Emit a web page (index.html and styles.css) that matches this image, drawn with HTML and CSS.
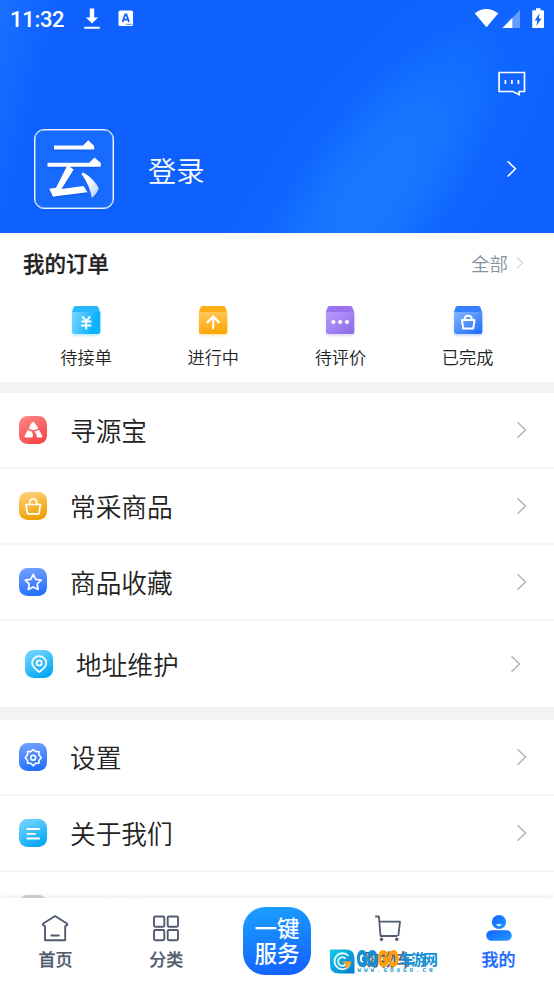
FILE: index.html
```html
<!DOCTYPE html>
<html lang="zh-CN">
<head>
<meta charset="utf-8">
<title>我的</title>
<link rel="stylesheet" href="styles.css">
</head>
<body>
<svg class="defs" width="0" height="0" aria-hidden="true">
  <defs>
    <linearGradient id="red" x1=".2" y1="0" x2=".7" y2="1"><stop stop-color="#ff8585"/><stop offset="1" stop-color="#f54545"/></linearGradient>
    <linearGradient id="gold" x1=".3" y1="0" x2=".6" y2="1"><stop stop-color="#ffcf73"/><stop offset="1" stop-color="#eea000"/></linearGradient>
    <linearGradient id="blue" x1=".4" y1="0" x2=".6" y2="1"><stop stop-color="#709eff"/><stop offset="1" stop-color="#2170ff"/></linearGradient>
    <linearGradient id="cyan" x1=".2" y1="0" x2=".7" y2="1"><stop offset=".15" stop-color="#65cfff"/><stop offset="1" stop-color="#00a6f5"/></linearGradient>
    <linearGradient id="boxCyan" x1="0" y1=".3" x2="1" y2=".6"><stop stop-color="#72d3ff"/><stop offset=".8" stop-color="#0bb2ff"/></linearGradient>
    <linearGradient id="boxGold" x1=".4" y1="0" x2=".6" y2="1"><stop stop-color="#ffc75b"/><stop offset="1" stop-color="#fca400"/></linearGradient>
    <linearGradient id="boxViolet" x1="0" y1=".2" x2=".8" y2="1"><stop stop-color="#b597fc"/><stop offset="1" stop-color="#8f6ee8"/></linearGradient>
    <linearGradient id="boxBlue" x1="0" y1=".1" x2=".8" y2="1"><stop stop-color="#83b1ff"/><stop offset="1" stop-color="#2472ff"/></linearGradient>
    <linearGradient id="user" x1="0" y1="0" x2="1" y2="1"><stop stop-color="#1463ff"/><stop offset="1" stop-color="#1e9bff"/></linearGradient>
    <linearGradient id="cloud" x1=".2" y1="0" x2="1" y2=".8"><stop offset=".3" stop-color="#fff"/><stop offset="1" stop-color="#b9d1ff"/></linearGradient>
    <linearGradient id="mark" x1="0" y1="0" x2="1" y2="1"><stop stop-color="#12cdea"/><stop offset="1" stop-color="#0878cd"/></linearGradient>
  </defs>
</svg>
<div class="app">
  <header class="hero">
    <div class="status">
      <span class="time">11:32</span>
      <svg class="download" width="16" height="22" viewBox="0 0 16 22" fill="#fff"><path d="M5.8.5h4.400v9h3.900L8 15.500 1.900 9.500h3.900zM.3 18.800h15.400v2H.3z"/></svg>
      <svg class="ime" width="16" height="17" viewBox="0 0 16 17"><rect x=".5" y=".5" width="14.500" height="15.500" rx="1.600" fill="#fff"/><path d="m4.600 12 2.600-7.500h1.200L11 12M5.500 9.600h4.600" fill="none" stroke="#1264fd" stroke-width="1.800"/><path d="M8 14.300h1.500m.6 0h1.500m.6 0h1.500" stroke="#1264fd"/></svg>
      <svg class="signals" width="72" height="22" viewBox="0 0 72 22"><path d="M.7 5.200Q12-3.400 24.300 5.200L12.500 19.300z" fill="#fff"/><path d="M46 2v18H28.500z" fill="#659bff"/><path d="M38.300 9.800V20H28.500z" fill="#fff"/><path d="M62 .3h4.500v2h2.700q.8 0 .8.8V19q0 .9-.8.9H59q-.8 0-.8-.9V3.100q0-.8.8-.8h3z" fill="#fff"/><path d="m65.700 5.200-5 7.300h2.700l-1 5.400 5-7.500h-2.700l1-5.200z" fill="#1264fd"/></svg>
    </div>
    <div class="toolbar">
      <svg width="28" height="26" viewBox="0 0 28 26" fill="none" stroke="#fff" stroke-width="1.700"><path d="M1.100 1.500h25.400v19h-5.300v3.200L15 20.500H1.100z"/><path d="M7.400 9v4m6.500-4v4m6.500-4v4"/></svg>
    </div>
    <div class="profile">
      <div class="avatar">
        <svg width="80" height="80" viewBox="0 0 80 80"><path d="M20 16.500h29l5.200-5.200 6 5.600v3.600H20zM13.500 33.700h41.700l5.300-5.200 6.300 5.500v3.800H13.500z" fill="#fff"/><path d="M33.500 36l6.200 4.500L27.500 60l22-3 4 6.200-30 3.700-4.500.8-3.700-8 6.700-1z" fill="#fff"/><path d="M49.500 43.500Q60 50 64.700 59q-1 5-6.900 10Q56 57 47.300 44.800z" fill="url(#cloud)"/></svg>
      </div>
      <span class="login">登录</span>
      <svg class="hero-arrow" width="12" height="18" viewBox="0 0 12 18" fill="none" stroke="#fff" stroke-width="1.600"><path d="m1.700 1.300 7.700 7.500-7.700 7.700"/></svg>
    </div>
  </header>

  <section class="orders">
    <div class="orders-head">
      <h2>我的订单</h2>
      <a class="all">全部<svg width="8" height="14" viewBox="0 0 8 14" fill="none" stroke="#cdd0d6" stroke-width="1.200"><path d="m1 1.500 5.500 5.300L1 12.300"/></svg></a>
    </div>
    <div class="order-grid">
      <div class="order cyan">
        <svg width="32" height="32" viewBox="0 0 32 32"><path d="M5.500 1h21q1.500 0 2 1.500L30 7H2l1.500-4.500Q4 1 5.500 1z" fill="#28b9fc"/><path d="M2 7h28.300v19.500q0 2.500-2.500 2.500H4.500Q2 29 2 26.500z" fill="url(#boxCyan)"/><path d="m12.200 11.500 4 4.500 4-4.500M11.300 16.500h10m-10 4h10M16.200 16v8.500" fill="none" stroke="#fff" stroke-width="2"/></svg>
        <span>待接单</span>
      </div>
      <div class="order gold">
        <svg width="32" height="32" viewBox="0 0 32 32"><path d="M5.500 1h21q1.500 0 2 1.500L30 7H2l1.500-4.500Q4 1 5.500 1z" fill="#fdac13"/><path d="M2 7h28.300v19.500q0 2.500-2.500 2.500H4.500Q2 29 2 26.500z" fill="url(#boxGold)"/><path d="M10.500 17.300l5.700-5.700 5.700 5.700M16.200 12v11.500" fill="none" stroke="#fff" stroke-width="2.200" stroke-linecap="round"/></svg>
        <span>进行中</span>
      </div>
      <div class="order violet">
        <svg width="32" height="32" viewBox="0 0 32 32"><path d="M5.500 1h21q1.500 0 2 1.500L30 7H2l1.500-4.500Q4 1 5.500 1z" fill="#9973ee"/><path d="M2 7h28.300v19.500q0 2.500-2.500 2.500H4.500Q2 29 2 26.500z" fill="url(#boxViolet)"/><g fill="#fff"><circle cx="9.400" cy="17" r="2.100"/><circle cx="16.200" cy="17" r="2.100"/><circle cx="23" cy="17" r="2.100"/></g></svg>
        <span>待评价</span>
      </div>
      <div class="order blue">
        <svg width="32" height="32" viewBox="0 0 32 32"><path d="M5.500 1h21q1.500 0 2 1.500L30 7H2l1.500-4.500Q4 1 5.500 1z" fill="#3680ff"/><path d="M2 7h28.300v19.500q0 2.500-2.500 2.500H4.500Q2 29 2 26.500z" fill="url(#boxBlue)"/><path d="M10 15h12.500l-1.300 8.500h-10zM12.400 15q.2-4.300 3.800-4.300t3.900 4.300" fill="none" stroke="#fff" stroke-width="2" stroke-linejoin="round"/></svg>
        <span>已完成</span>
      </div>
    </div>
  </section>

  <main class="menu">
    <section class="group">
      <div class="row">
        <svg class="badge" viewBox="0 0 28 28"><rect width="28" height="28" rx="8.500" fill="url(#red)"/><path d="M12.500 6.900q1.700-1.600 3.400 0l3.400 5.400q-2.800 2.100-5.300 1.900L9.600 12.400zM8.600 13.900l4.400 1.900q1.500 2.800.5 5.600H6.300q-1.200-.2-.7-1.500zm6.900 1.500q2.700-.4 4.400-1.700l3.400 6.200q.5 1.400-.9 1.500H18q-.2-3.500-2.500-6z" fill="#fff"/></svg>
        <span>寻源宝</span><svg class="chevron" viewBox="0 0 12 18"><path d="m1.500 1.200 8 7.800-8 7.800"/></svg>
      </div>
      <div class="row">
        <svg class="badge" viewBox="0 0 28 28"><rect width="28" height="28" rx="8.500" fill="url(#gold)"/><path d="M7 12.500h14.400l-1.500 9.300H8.500zM10.500 12.500q0-5.800 3.700-5.800t3.800 5.800" fill="none" stroke="#fff" stroke-width="1.700" stroke-linejoin="round"/></svg>
        <span>常采商品</span><svg class="chevron" viewBox="0 0 12 18"><path d="m1.500 1.200 8 7.800-8 7.800"/></svg>
      </div>
      <div class="row">
        <svg class="badge" viewBox="0 0 28 28"><rect width="28" height="28" rx="8.500" fill="url(#blue)"/><path d="m14.200 6.400 2.500 4.900 5.400.8-3.900 3.900.9 5.500-4.900-2.600-4.900 2.600.9-5.500-3.900-3.900 5.400-.8z" fill="none" stroke="#fff" stroke-width="1.700" stroke-linejoin="round"/></svg>
        <span>商品收藏</span><svg class="chevron" viewBox="0 0 12 18"><path d="m1.500 1.200 8 7.800-8 7.800"/></svg>
      </div>
      <div class="row address">
        <svg class="badge" viewBox="0 0 28 28"><rect width="28" height="28" rx="8.500" fill="url(#cyan)"/><path d="M14.200 22q-7.100-5.200-7.100-9a7.100 6.800 0 0 1 14.200 0q0 3.800-7.100 9z" fill="none" stroke="#fff" stroke-width="1.700"/><circle cx="14.200" cy="13" r="2.500" fill="none" stroke="#fff" stroke-width="1.700"/></svg>
        <span>地址维护</span><svg class="chevron" viewBox="0 0 12 18"><path d="m1.500 1.200 8 7.800-8 7.800"/></svg>
      </div>
    </section>
    <section class="group">
      <div class="row">
        <svg class="badge" viewBox="0 0 28 28"><rect width="28" height="28" rx="8.500" fill="url(#blue)"/><path d="m14.200 6.600 2.600 2h3.100v3.200l2.300 2.900-2.300 2.700v2.800h-3.100l-2.600 2.400-2.600-2.400H8.500v-2.800l-2.200-2.700 2.200-2.900V8.600h3.100z" fill="none" stroke="#fff" stroke-width="1.600" stroke-linejoin="round"/><circle cx="14.200" cy="14.700" r="2.400" fill="none" stroke="#fff" stroke-width="1.600"/></svg>
        <span>设置</span><svg class="chevron" viewBox="0 0 12 18"><path d="m1.500 1.200 8 7.800-8 7.800"/></svg>
      </div>
      <div class="row">
        <svg class="badge" viewBox="0 0 28 28"><rect width="28" height="28" rx="8.500" fill="url(#cyan)"/><path d="M8.300 10h11.900M8.300 14.800h7.800M8.300 19.500h11.900" stroke="#fff" stroke-width="1.800" stroke-linecap="round"/></svg>
        <span>关于我们</span><svg class="chevron" viewBox="0 0 12 18"><path d="m1.500 1.200 8 7.800-8 7.800"/></svg>
      </div>
      <div class="row faded">
        <svg class="badge" viewBox="0 0 28 28"><rect width="28" height="28" rx="8.500" fill="#d2d2d2"/></svg>
        <span>退出登录</span>
      </div>
    </section>
  </main>

  <nav class="tabs">
    <a class="tab"><svg width="30" height="30" viewBox="0 0 30 30" fill="none" stroke="#515c6f" stroke-width="1.900" stroke-linejoin="round" stroke-linecap="round"><path d="M5 12.300 2.900 10.900 3.300 9.500 15.100 2 26.900 9.500l.4 1.400-2.100 1.400v14H5z"/><path d="M11.300 21.500h7.500"/></svg><span>首页</span></a>
    <a class="tab"><svg width="30" height="30" viewBox="0 0 30 30" fill="none" stroke="#515c6f" stroke-width="1.900"><rect x="3" y="2.500" width="10.300" height="10.300" rx="1.200"/><rect x="16.700" y="2.500" width="10.300" height="10.300" rx="1.200"/><rect x="3" y="16" width="10.300" height="10.300" rx="1.200"/><rect x="16.700" y="16" width="10.300" height="10.300" rx="1.200"/></svg><span>分类</span></a>
    <a class="service"><span>一键</span><span>服务</span></a>
    <a class="tab"><svg width="30" height="30" viewBox="0 0 30 30" fill="none" stroke="#515c6f" stroke-width="1.800" stroke-linejoin="round"><path d="M2.200 2.500h3.700L7.500 22H24.300M6.500 7.700h20.500L25.300 22"/><circle cx="8.500" cy="25.300" r="1.300" fill="#515c6f" stroke-width="1"/><circle cx="23.800" cy="25.300" r="1.300" fill="#515c6f" stroke-width="1"/></svg><span>购物车</span>
      <span class="watermark"><svg width="25" height="25" viewBox="0 0 25 25"><path d="M0 .5h16Q24.500.5 24.500 9v15.500H9Q0 24.500 0 16z" fill="url(#mark)"/><path d="M18.500 7a8 8 0 1 0 1.300 8.500M15.500 9.500a4.300 4.300 0 1 0 0 6" fill="none" stroke="#e9fbff" stroke-width="1.800"/><path d="M12 12.500h9.500q-1 5.500-6.500 7.500l1-4z" fill="#ffa51d"/></svg><span class="brand"><span class="brand-name"><b>GO</b><b class="orange">GO</b><i>车游网</i></span><small>WWW.GO9GO.CN</small></span></span>
    </a>
    <a class="tab active"><svg width="30" height="30" viewBox="0 0 30 30"><circle cx="15" cy="8" r="7.100" fill="url(#user)"/><rect x="2.200" y="16.300" width="25.500" height="10.500" rx="5.200" fill="url(#user)"/><path d="M12.200 10.300h5.400q-.7 2-2.700 2t-2.700-2z" fill="#fff"/></svg><span>我的</span></a>
  </nav>
</div>
</body>
</html>
```
FILE: styles.css
```css
* { box-sizing: border-box; }
body {
  margin: 0;
  background: #fff;
  color: #222;
  font-family: "Noto Sans CJK SC", sans-serif;
}
svg { display: block; flex: none; }
.defs { position: absolute; }
.app { width: 554px; height: 984px; overflow: hidden; display: flex; flex-direction: column; }

.hero {
  position: relative;
  isolation: isolate;
  overflow: hidden;
  flex: none;
  height: 233px;
  color: #fff;
  background: linear-gradient(104deg, #1a70ff 0, rgba(26,112,255,0) 60px), #0f61ff;
}
/* diagonal glow */
.hero::before {
  content: "";
  position: absolute;
  z-index: -1;
  left: 75px;
  top: 80px;
  width: 600px;
  height: 220px;
  transform: rotate(-54deg);
  background: radial-gradient(closest-side, #1a78ff 0, rgba(24,118,255,.9) 35%, rgba(16,108,255,.5) 65%, transparent 100%);
}
.status { height: 38px; display: flex; align-items: flex-start; padding: 8px 8px 0 10px; }
.time { font: 500 22px/23px Roboto, sans-serif; width: 74px; letter-spacing: -.3px; }
.ime { margin: 2px 0 0 18px; }
.signals { margin-left: auto; }
.toolbar { height: 68px; display: flex; justify-content: flex-end; padding: 33px 28px 0 0; }
.profile { display: flex; align-items: center; height: 80px; margin-top: 23px; padding: 0 36px 0 34px; }
.avatar { width: 80px; height: 80px; border: 1px solid #f0f5ff; border-radius: 10px; background: #176bff; overflow: hidden; box-shadow: inset 0 0 0 .5px #d6e4ff; }
.avatar svg { margin: -1px; filter: drop-shadow(0 1px 1px rgba(0,40,160,.3)); }
.login { margin: 2px 0 0 34px; font-size: 28.300px; line-height: 40px; font-weight: 350; }
.hero-arrow { margin-left: auto; }

.orders { flex: none; height: 149px; }
.orders-head { display: flex; justify-content: space-between; align-items: center; height: 60px; padding: 0 30px 0 23px; }
h2 { margin: 0; font-size: 21.500px; line-height: 30px; font-weight: 500; -webkit-text-stroke: .3px currentColor; }
.all { display: flex; align-items: center; gap: 8px; color: #8591a2; font-size: 18.500px; font-weight: 350; }
.order-grid { display: grid; grid-template-columns: repeat(4, 127.200px); padding-left: 22.500px; margin-top: 12px; }
.order { display: flex; flex-direction: column; align-items: center; font-size: 17.200px; line-height: 24px; font-weight: 350; }
.order span { margin-top: 8px; }
.cyan svg { filter: drop-shadow(0 2px 1px rgba(20,180,255,.25)); }
.gold svg { filter: drop-shadow(0 2px 1px rgba(255,170,0,.25)); }
.violet svg { filter: drop-shadow(0 2px 1px rgba(145,110,235,.25)); }
.blue svg { filter: drop-shadow(0 2px 1px rgba(36,114,255,.25)); }

.menu { flex: 1; min-height: 0; overflow: hidden; }
.group { border-top: 11px solid #f3f3f3; }
.group + .group { border-top-width: 13px; }
.row { height: 76px; padding: 0 26px 0 19px; display: flex; align-items: center; border-bottom: 2px solid #f5f5f5; font-size: 25.700px; line-height: 36px; font-weight: 350; }
.row span { margin: 0 0 0 23px; }
.badge { width: 28px; height: 28px; }
.chevron { width: 12px; height: 18px; margin-left: auto; fill: none; stroke: #b0b3b8; stroke-width: 1.500; }
.address { height: 86px; padding: 0 32px 0 25px; border: 0; }
.faded { height: 74px; color: #ccc; border: 0; }

.tabs { position: relative; flex: none; height: 86px; display: grid; grid-template-columns: repeat(5, 1fr); box-shadow: 0 -2px 5px rgba(0,0,0,.07); background: #fff; }
.tab { position: relative; display: flex; flex-direction: column; align-items: center; padding-top: 16px; color: #515c6f; font-size: 17px; line-height: 24px; font-weight: 500; -webkit-text-stroke: .25px currentColor; }
.tab > span:not(.watermark) { margin-top: 3px; }
.active { color: #1768ff; }
.service { width: 68px; height: 68px; margin: 9px auto 0; padding-top: 8px; border-radius: 22px; background: linear-gradient(170deg, #1aa2ff, #145dff); color: #fff; display: flex; flex-direction: column; align-items: center; font-size: 22.500px; line-height: 25px; font-weight: 500; }
.watermark { position: absolute; left: -2px; top: 51px; display: flex; gap: 2px; width: 107px; -webkit-text-stroke: 0; }
.brand { display: block; height: 25px; }
.brand-name { display: flex; align-items: center; height: 19px; color: #1390d4; }
.brand-name b { font: bold 22px/19px "Liberation Sans", sans-serif; width: 21px; flex: none; transform: scaleX(.6); transform-origin: left; -webkit-text-stroke: 1.800px currentColor; }
.brand-name .orange { color: #ff9e0b; }
.brand-name i { flex: none; font-style: normal; font-size: 15px; line-height: 19px; letter-spacing: -3.200px; font-weight: 700; }
.brand small { display: block; font: bold 6px/6px "Liberation Mono", monospace; letter-spacing: 2.900px; color: #1b9bd5; white-space: nowrap; }
```
